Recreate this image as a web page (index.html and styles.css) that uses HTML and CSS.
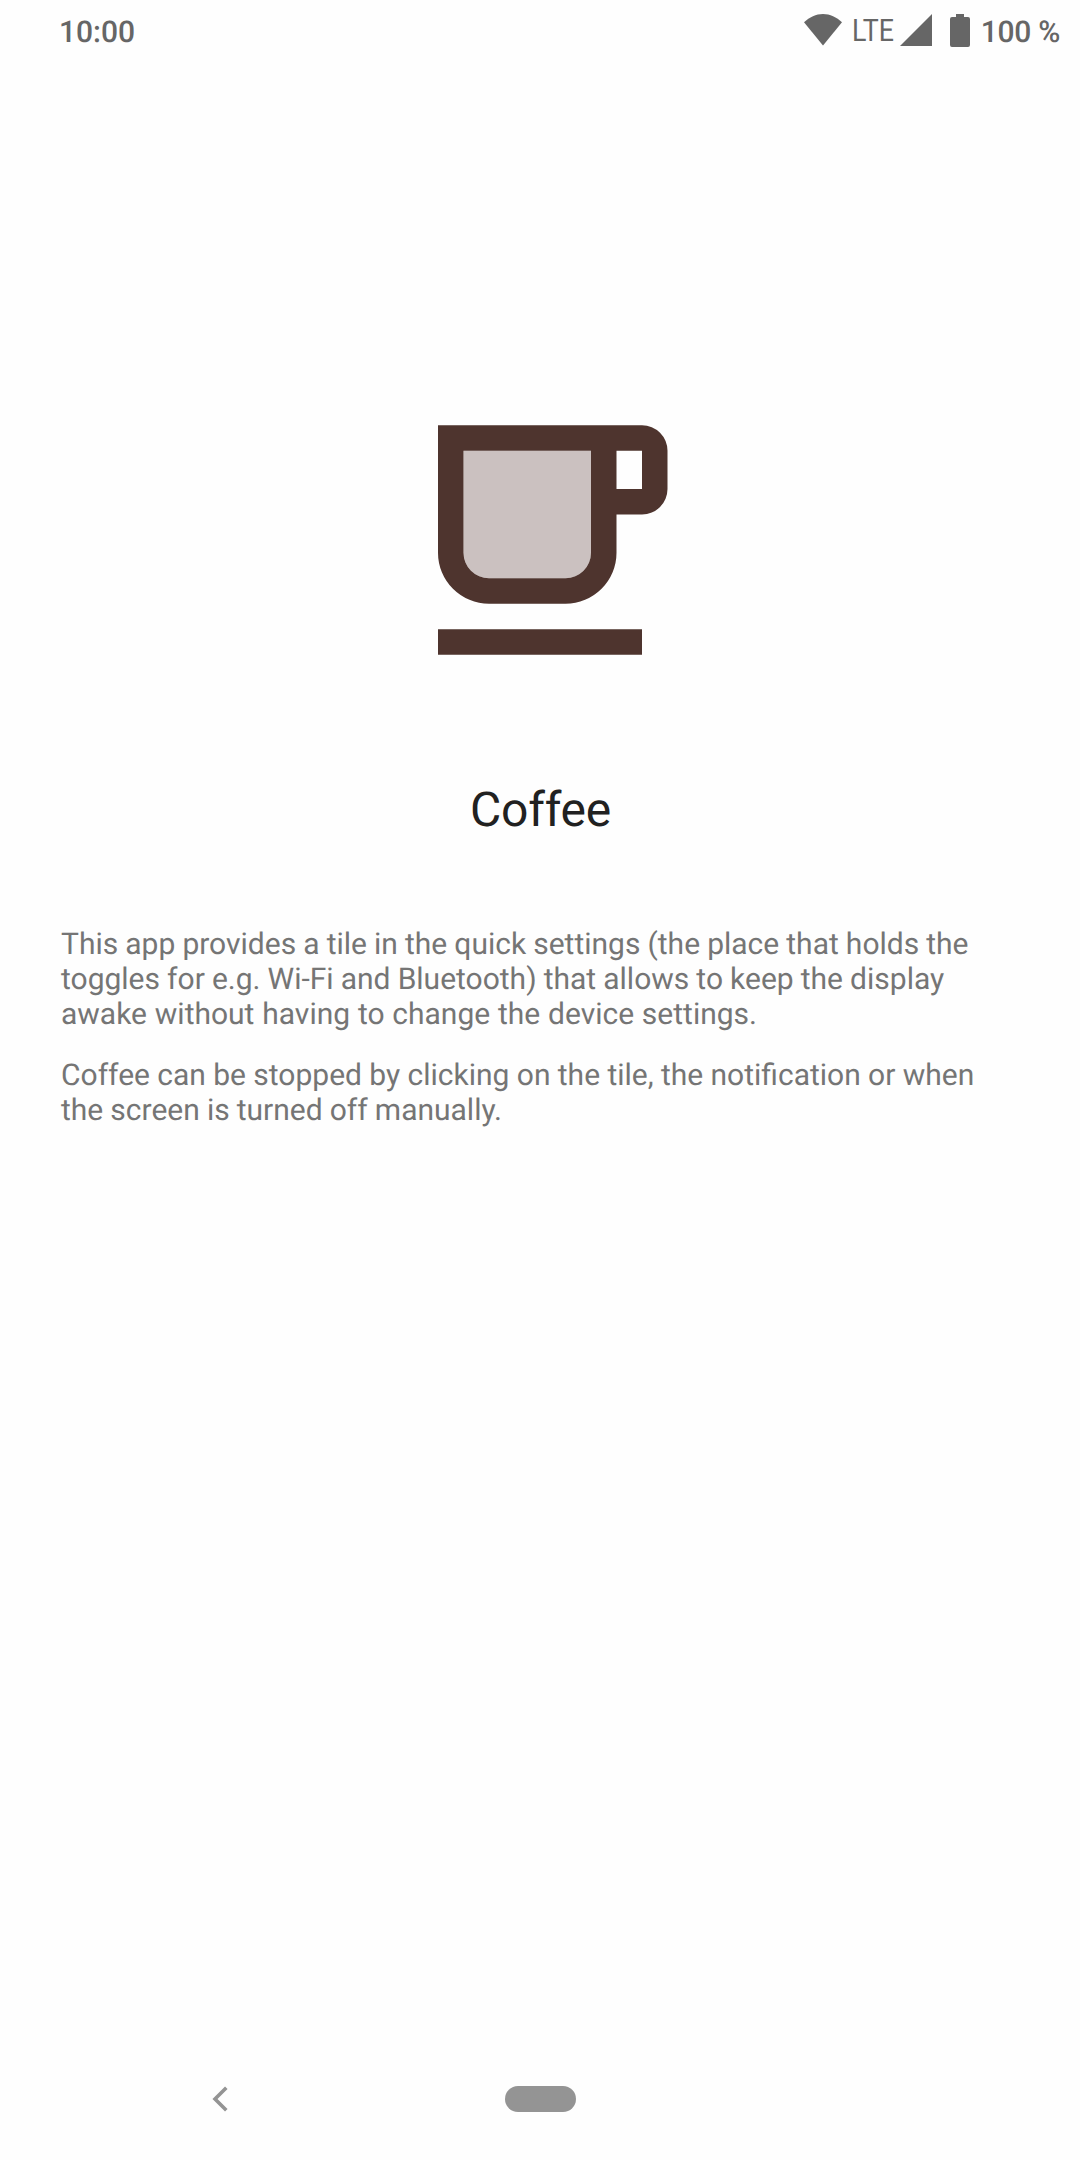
FILE: index.html
```html
<!DOCTYPE html>
<html lang="en">
<head>
<meta charset="utf-8">
<title>Coffee</title>
<link rel="stylesheet" href="styles.css">
</head>
<body>
<header class="status">
  <span class="clock">10:00</span>
  <div class="indicators">
    <svg class="wifi" width="38" height="32" viewBox="0 0 38 32"><path d="M19 31.500 0 8.300C5.500 3.200 12 0 19 0s13.500 3.200 19 8.300z"/></svg>
    <svg class="lte" width="46" height="44" viewBox="0 0 46 44"><text x="0" y="33" textLength="42" lengthAdjust="spacingAndGlyphs">LTE</text></svg>
    <svg class="signal" width="32" height="32" viewBox="0 0 32 32"><path d="M0 32 32 0V32z"/></svg>
    <svg class="battery" width="20" height="33" viewBox="0 0 20 33"><path d="M6 0h8v3h4q2 0 2 2V31q0 2-2 2H2q-2 0-2-2V5q0-2 2-2h4z"/></svg>
    <span class="percent">100 %</span>
  </div>
</header>
<main class="content">
  <svg class="cup" width="306" height="306" viewBox="0 0 24 24"><path class="drink" d="M6 5H16V13A2 2 0 0 1 14 15H8A2 2 0 0 1 6 13Z"/><path class="line" fill-rule="evenodd" d="M4 19H20V21H4ZM4 3H20A2 2 0 0 1 22 5V8A2 2 0 0 1 20 10H18V13A4 4 0 0 1 14 17H8A4 4 0 0 1 4 13ZM6 5V13A2 2 0 0 0 8 15H14A2 2 0 0 0 16 13V5ZM18 5V8H20V5Z"/></svg>
  <h1 class="title">Coffee</h1>
  <p class="text"><span class="tight">This app provides a tile in the quick settings (the place that holds the toggles for e.g. Wi-Fi and Bluetooth) that allows to keep the display</span> <span class="loose">awake without having to change the device settings.</span></p>
  <p class="text"><span class="snug">Coffee can be stopped by clicking on the tile, the notification or when</span> <span class="tight">the screen is turned off manually.</span></p>
</main>
<nav class="navbar">
  <svg class="back" width="16" height="26" viewBox="0 0 16 26"><path d="M14.300 1.700 3 13 14.300 24.300"/></svg>
  <span class="home"></span>
</nav>
</body>
</html>
```
FILE: styles.css
```css
body {
  margin: 0;
  height: 2160px;
  display: flex;
  flex-direction: column;
  background: #fefefe;
  font-family: Roboto, sans-serif;
  text-rendering: geometricPrecision;
}

.status {
  height: 63px;
  box-sizing: border-box;
  display: flex;
  justify-content: space-between;
  padding: 0 20px 0 59px;
  color: #666;
  fill: #666;
  font-size: 30px;
  font-weight: 500;
  line-height: 65px;
}

.indicators {
  display: flex;
  align-items: flex-start;
}

.indicators svg {
  margin-top: 14px;
}

.indicators .lte {
  margin: 8px 0 0 10px;
  overflow: visible;
  font-size: 31px;
  font-weight: 400;
}

.signal {
  margin-left: 2px;
}

.battery {
  margin: 0 11px 0 18px;
}

.percent {
  letter-spacing: -0.3px;
}

.content {
  flex: 1;
  display: flex;
  flex-direction: column;
  padding: 324px 60px 0;
}

.cup {
  align-self: center;
}

.drink {
  fill: #cbc1c0;
}

.line {
  fill: #4e342e;
}

.title {
  margin: 89px 0;
  color: #212121;
  font-size: 48px;
  font-weight: 400;
  letter-spacing: -0.2px;
  line-height: 56px;
  text-align: center;
  text-indent: 1px;
}

.text {
  margin: 0 0 26px;
  padding-left: 1px;
  color: #757575;
  font-size: 30px;
  line-height: 35px;
}

.tight {
  word-spacing: -0.35px;
}

.snug {
  word-spacing: -0.1px;
}

.loose {
  word-spacing: 0.35px;
}

.navbar {
  height: 122px;
  display: flex;
  align-items: center;
  padding-left: 212px;
}

.back {
  fill: none;
  stroke: #949494;
  stroke-width: 3.6;
}

.home {
  width: 71px;
  height: 26px;
  margin-left: 277px;
  border-radius: 13px;
  background: #949494;
}
```
